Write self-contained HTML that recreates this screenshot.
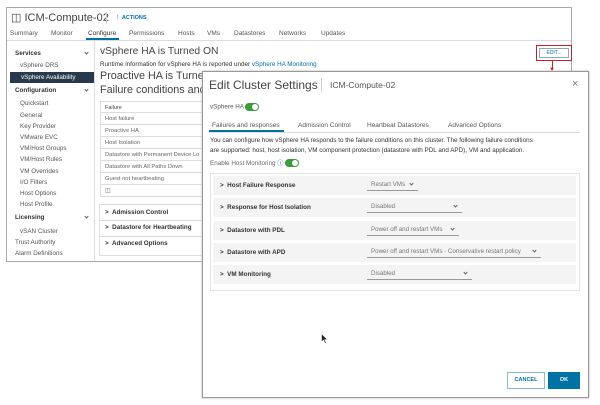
<!DOCTYPE html>
<html><head><style>
*{margin:0;padding:0;box-sizing:border-box}
body{width:600px;height:405px;background:#fff;font-family:"Liberation Sans",sans-serif;position:relative;overflow:hidden;color:#333}
.a{position:absolute;white-space:nowrap}
.bg{position:absolute;left:6px;top:7px;width:566px;height:255px;border:1px solid #aaa;background:#fff}
.s{font-size:6.3px;color:#555}
.b{font-weight:bold;color:#333}
.row{position:absolute;left:100px;width:110px;height:12px;border:1px solid #ddd;border-top:none;font-size:5.8px;color:#666;padding:3px 4px}
.m{position:absolute;left:202px;top:71px;width:387px;height:327px;background:#fff;border:1px solid #999;box-shadow:0 0 2px #aaa}
.pr{position:absolute;left:213px;width:363px;height:19px;background:#f4f4f4;font-size:6.3px;font-weight:bold;color:#333;padding:6px 7px}
.dd{position:absolute;font-size:6.2px;color:#777;border-bottom:1px solid #999;height:10px}
.tog{display:inline-block;width:14px;height:8px;border-radius:4px;background:#3c9c3c;position:relative;vertical-align:middle}
.tog:after{content:"";position:absolute;right:1px;top:1px;width:6px;height:6px;border-radius:3px;background:#fff}
.cv{display:inline-block;width:3px;height:3px;border-right:1px solid #666;border-bottom:1px solid #666;transform:rotate(45deg);position:absolute}
</style></head><body>
<div class="bg"></div>
<div class="a" style="left:11px;top:11px;font-size:11px;color:#444">&#9707; ICM-Compute-02</div>
<div class="a" style="left:106px;top:12px;width:1px;height:12px;background:#ccc"></div>
<div class="a" style="left:115px;top:15px;font-size:5.5px;color:#0072a3;font-weight:bold">&#8942; ACTIONS</div>
<div class="a s" style="left:10px;top:30px;font-size:6.5px">Summary</div>
<div class="a s" style="left:51px;top:30px;font-size:6.5px">Monitor</div>
<div class="a s" style="left:88px;top:30px;font-size:6.5px;color:#333">Configure</div>
<div class="a" style="left:86px;top:38px;width:33px;height:2px;background:#0072a3"></div>
<div class="a s" style="left:129px;top:30px;font-size:6.5px">Permissions</div>
<div class="a s" style="left:178px;top:30px;font-size:6.5px">Hosts</div>
<div class="a s" style="left:207px;top:30px;font-size:6.5px">VMs</div>
<div class="a s" style="left:234px;top:30px;font-size:6.5px">Datastores</div>
<div class="a s" style="left:279px;top:30px;font-size:6.5px">Networks</div>
<div class="a s" style="left:321px;top:30px;font-size:6.5px">Updates</div>
<div class="a" style="left:7px;top:40px;width:564px;height:1px;background:#ddd"></div>
<div class="a" style="left:94px;top:41px;width:1px;height:220px;background:#ddd"></div>
<div class="a s b" style="left:15px;top:50px">Services</div><span class="cv" style="left:85px;top:51px"></span>
<div class="a s" style="left:20px;top:62px">vSphere DRS</div>
<div class="a" style="left:10px;top:72px;width:84px;height:11px;background:#27394a"></div>
<div class="a s" style="left:21px;top:74px;color:#fff">vSphere Availability</div>
<div class="a s b" style="left:15px;top:87px">Configuration</div><span class="cv" style="left:85px;top:88px"></span>
<div class="a s" style="left:20px;top:100px">Quickstart</div>
<div class="a s" style="left:20px;top:112px">General</div>
<div class="a s" style="left:20px;top:123px">Key Provider</div>
<div class="a s" style="left:20px;top:134px">VMware EVC</div>
<div class="a s" style="left:20px;top:145px">VM/Host Groups</div>
<div class="a s" style="left:20px;top:156px">VM/Host Rules</div>
<div class="a s" style="left:20px;top:168px">VM Overrides</div>
<div class="a s" style="left:20px;top:179px">I/O Filters</div>
<div class="a s" style="left:20px;top:190px">Host Options</div>
<div class="a s" style="left:20px;top:201px">Host Profile</div>
<div class="a s b" style="left:15px;top:214px">Licensing</div><span class="cv" style="left:85px;top:215px"></span>
<div class="a s" style="left:20px;top:228px">vSAN Cluster</div>
<div class="a s" style="left:15px;top:239px">Trust Authority</div>
<div class="a s" style="left:15px;top:250px">Alarm Definitions</div>
<div class="a" style="left:100px;top:46px;font-size:10.3px;color:#444">vSphere HA is Turned ON</div>
<div class="a" style="left:100px;top:61px;font-size:6.3px;color:#333">Runtime information for vSphere HA is reported under <span style="color:#0072a3">vSphere HA Monitoring</span></div>
<div class="a" style="left:100px;top:70px;font-size:10.8px;color:#444">Proactive HA is Turned</div>
<div class="a" style="left:100px;top:84px;font-size:10.8px;color:#444">Failure conditions and</div>
<div class="row" style="top:101px;border-top:1px solid #ddd;color:#444;font-size:5.5px">Failure</div>
<div class="row" style="top:113px">Host failure</div>
<div class="row" style="top:125px">Proactive HA</div>
<div class="row" style="top:137px">Host Isolation</div>
<div class="row" style="top:149px">Datastore with Permanent Device Lo</div>
<div class="row" style="top:161px">Datastore with All Paths Down</div>
<div class="row" style="top:173px">Guest not heartbeating</div>
<div class="row" style="top:185px">&#9707;</div>
<div class="a" style="left:99px;top:204px;width:104px;height:52px;border:1px solid #ddd"></div>
<div class="a s b" style="left:105px;top:209px">&gt;&nbsp; Admission Control</div>
<div class="a" style="left:99px;top:220px;width:104px;height:1px;background:#ddd"></div>
<div class="a s b" style="left:105px;top:224px">&gt;&nbsp; Datastore for Heartbeating</div>
<div class="a" style="left:99px;top:236px;width:104px;height:1px;background:#ddd"></div>
<div class="a s b" style="left:105px;top:240px">&gt;&nbsp; Advanced Options</div>
<div class="a" style="left:536px;top:45px;width:36px;height:16px;border:1.5px solid #c8202a"></div>
<div class="a" style="left:539px;top:48px;width:30px;height:10px;border:1px solid #8ab;font-size:5px;color:#0072a3;text-align:center;line-height:8px">EDIT...</div>
<div class="a" style="left:552px;top:61px;width:1px;height:9px;background:#c8202a"></div>
<div class="a" style="left:549px;top:67px;font-size:6px;color:#c8202a">&#9660;</div>
<div class="m"></div>
<div class="a" style="left:209px;top:78px;font-size:12px;color:#444">Edit Cluster Settings</div>
<div class="a" style="left:321px;top:78px;width:1px;height:14px;background:#ccc"></div>
<div class="a" style="left:330px;top:80px;font-size:8.5px;color:#555">ICM-Compute-02</div>
<div class="a" style="left:572px;top:78px;font-size:11px;color:#777">&#215;</div>
<div class="a s" style="left:210px;top:103px">vSphere HA <span class="tog"></span></div>
<div class="a s" style="left:212px;top:122px;font-size:6.5px">Failures and responses</div>
<div class="a s" style="left:298px;top:122px;font-size:6.5px">Admission Control</div>
<div class="a s" style="left:367px;top:122px;font-size:6.5px">Heartbeat Datastores</div>
<div class="a s" style="left:448px;top:122px;font-size:6.5px">Advanced Options</div>
<div class="a" style="left:209px;top:132px;width:371px;height:1px;background:#ddd"></div>
<div class="a" style="left:209px;top:130px;width:75px;height:2px;background:#0072a3"></div>
<div class="a" style="left:210px;top:136px;font-size:6.3px;color:#333;line-height:10px">You can configure how vSphere HA responds to the failure conditions on this cluster. The following failure conditions<br>are supported: host, host isolation, VM component protection (datastore with PDL and APD), VM and application.</div>
<div class="a s" style="left:210px;top:158px;color:#666">Enable Host Monitoring <span style="color:#0072a3">&#9432;</span> <span class="tog"></span></div>
<div class="a" style="left:210px;top:173px;width:370px;height:118px;border:1px solid #e4e4e4"></div>
<div class="pr" style="top:176px">&gt;&nbsp; Host Failure Response</div>
<div class="pr" style="top:198px">&gt;&nbsp; Response for Host Isolation</div>
<div class="pr" style="top:221px">&gt;&nbsp; Datastore with PDL</div>
<div class="pr" style="top:243px">&gt;&nbsp; Datastore with APD</div>
<div class="pr" style="top:265px">&gt;&nbsp; VM Monitoring</div>
<div class="dd" style="left:367px;top:181px;width:51px;padding-left:4px">Restart VMs</div><span class="cv" style="left:410px;top:182px"></span>
<div class="dd" style="left:367px;top:203px;width:95px;padding-left:4px">Disabled</div><span class="cv" style="left:454px;top:204px"></span>
<div class="dd" style="left:367px;top:226px;width:92px;padding-left:4px">Power off and restart VMs</div><span class="cv" style="left:451px;top:227px"></span>
<div class="dd" style="left:367px;top:248px;width:174px;padding-left:4px">Power off and restart VMs - Conservative restart policy</div><span class="cv" style="left:533px;top:249px"></span>
<div class="dd" style="left:367px;top:270px;width:105px;padding-left:4px">Disabled</div><span class="cv" style="left:464px;top:271px"></span>
<div class="a" style="left:507px;top:372px;width:38px;height:17px;border:1px solid #8bc;font-size:5.5px;color:#0072a3;text-align:center;line-height:15px;font-weight:bold">CANCEL</div>
<div class="a" style="left:548px;top:372px;width:32px;height:17px;background:#0072a3;font-size:5.5px;color:#fff;text-align:center;line-height:17px;font-weight:bold">OK</div>
<svg class="a" style="left:321px;top:333px" width="7" height="11" viewBox="0 0 7 11"><path d="M0.5 0.5 L0.5 9 L2.5 7 L4 10.5 L5.2 10 L3.8 6.7 L6.5 6.7 Z" fill="#222" stroke="#fff" stroke-width="0.6"/></svg>
</body></html>
